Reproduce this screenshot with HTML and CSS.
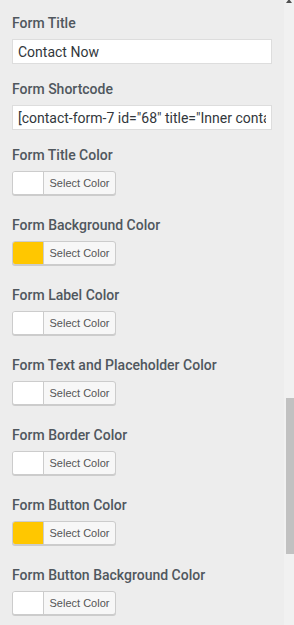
FILE: index.html
```html
<!DOCTYPE HTML>
<html lang="en">
  <head>
    <title>Contact Form Settings</title>
    <meta charset="utf-8">
    <link rel="stylesheet" href="styles.css">
  </head>
  <body>

  <div id="panel">
    <div id="fields">

      <div class="field">
        <label class="label">Form Title</label>
        <input class="text" type="text" value="Contact Now">
      </div>

      <div class="field">
        <label class="label">Form Shortcode</label>
        <input class="text" type="text" value='[contact-form-7 id="68" title="Inner contact form"]'>
      </div>

      <div class="field color">
        <label class="label">Form Title Color</label>
        <button class="color-result"><span class="swatch"></span><span class="pick">Select Color</span></button>
      </div>

      <div class="field color">
        <label class="label">Form Background Color</label>
        <button class="color-result"><span class="swatch yellow"></span><span class="pick">Select Color</span></button>
      </div>

      <div class="field color">
        <label class="label">Form Label Color</label>
        <button class="color-result"><span class="swatch"></span><span class="pick">Select Color</span></button>
      </div>

      <div class="field color">
        <label class="label">Form Text and Placeholder Color</label>
        <button class="color-result"><span class="swatch"></span><span class="pick">Select Color</span></button>
      </div>

      <div class="field color">
        <label class="label">Form Border Color</label>
        <button class="color-result"><span class="swatch"></span><span class="pick">Select Color</span></button>
      </div>

      <div class="field color">
        <label class="label">Form Button Color</label>
        <button class="color-result"><span class="swatch yellow"></span><span class="pick">Select Color</span></button>
      </div>

      <div class="field color">
        <label class="label">Form Button Background Color</label>
        <button class="color-result"><span class="swatch"></span><span class="pick">Select Color</span></button>
      </div>

    </div>

    <div id="scrollbar">
      <div class="arrow"></div>
      <div class="thumb"></div>
    </div>
  </div>

  </body>
</html>
```

FILE: styles.css
```css
html {
  height: 100%;
}
body {
  margin: 0;
  padding: 0;
  background: #ededed;
  font-family: Roboto, "Liberation Sans", sans-serif;
  height: 100%;
  overflow: hidden;
}

#panel {
  display: flex;
  height: 100%;
}

#fields {
  flex: 1;
  padding: 13px 12px 0 12px;
}

.field {
  display: flex;
  flex-direction: column;
  align-items: flex-start;
  margin-bottom: 15px;
}
.field.color {
  margin-bottom: 20px;
}

.label {
  font-size: 14px;
  font-weight: 500;
  line-height: 20px;
  color: #50575e;
  margin-bottom: 6px;
}

.text {
  box-sizing: border-box;
  width: 260px;
  height: 25px;
  margin: 0;
  padding: 0 5px;
  border: 1px solid #dddddd;
  border-radius: 0;
  background: #fff;
  color: #32373c;
  font-family: Roboto, "Liberation Sans", sans-serif;
  font-size: 14px;
  outline: none;
}

.color-result {
  display: flex;
  box-sizing: border-box;
  height: 24px;
  width: 104px;
  margin: 0;
  padding: 0;
  border: 1px solid #cccccc;
  border-radius: 3px;
  background: #f7f7f7;
  box-shadow: 0 1px 0 #cccccc;
  overflow: hidden;
  cursor: pointer;
}

.swatch {
  width: 30px;
  height: 100%;
  background: #ffffff;
  border-right: 1px solid #cccccc;
}
.swatch.yellow {
  background: #ffc700;
}

.pick {
  flex: 1;
  font-size: 11px;
  line-height: 22px;
  color: #555555;
  text-align: center;
}

#scrollbar {
  width: 10px;
  background: #f1f1f1;
  display: flex;
  flex-direction: column;
  align-items: flex-end;
}

.arrow {
  width: 0;
  height: 0;
  margin-right: 2px;
  margin-top: -1px;
  border-left: 3px solid transparent;
  border-right: 3px solid transparent;
  border-bottom: 4px solid #505050;
}

.thumb {
  width: 8px;
  height: 156px;
  margin-top: 395px;
  background: #c1c1c1;
}
```
